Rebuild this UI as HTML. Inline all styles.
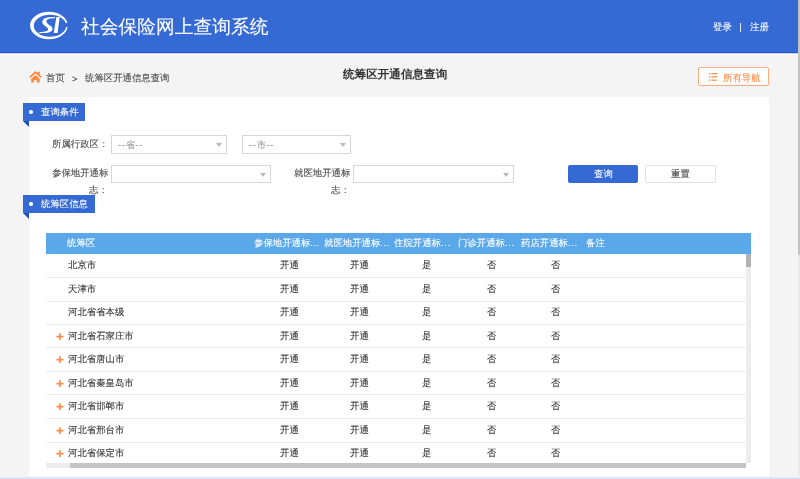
<!DOCTYPE html>
<html><head><meta charset="utf-8"><style>
*{margin:0;padding:0;box-sizing:border-box}
html,body{width:800px;height:479px;overflow:hidden;background:#f4f4f4;font-family:"Liberation Sans",sans-serif;color:#333}
.abs{position:absolute}
.t{position:absolute;white-space:nowrap;line-height:1;-webkit-text-stroke:0.1px currentColor;will-change:transform}
body{text-rendering:geometricPrecision}
</style></head><body>
<div class="abs" style="left:0px;top:0px;width:800px;height:52px;background:#3569d4"></div>
<div class="abs" style="left:0px;top:52px;width:800px;height:1px;background:#2358d2"></div>
<div class="abs" style="left:0px;top:53px;width:800px;height:1px;background:#c4d0ee"></div>
<div class="abs" style="left:0px;top:54px;width:800px;height:1px;background:#fdfdf6"></div>
<svg class="abs" style="left:28px;top:8px" width="44" height="34" viewBox="0 0 44 34">
  <path fill="#fff" fill-rule="evenodd" d="M2.1 17.5 A18.8 13.65 0 1 0 39.7 17.5 A18.8 13.65 0 1 0 2.1 17.5 Z M5.8 17.8 A16.2 11 0 1 0 38.2 17.8 A16.2 11 0 1 0 5.8 17.8 Z"/>
  <path fill="#3569d4" d="M35 15.6 L41 14.6 L41 19.2 L35 18.4 Z"/>
  <path fill="#fff" d="M26.67 9.08 C25.76 8.89 22.50 8.96 20.83 9.17 C19.17 9.38 17.71 9.72 16.67 10.33 C15.62 10.94 14.97 12.10 14.58 12.83 C14.20 13.56 14.17 14.01 14.38 14.71 C14.58 15.40 15.17 16.31 15.83 17.00 C16.49 17.69 17.67 18.32 18.33 18.88 C18.99 19.43 19.51 19.85 19.79 20.33 C20.07 20.82 20.14 21.34 20.00 21.79 C19.86 22.24 19.58 22.73 18.96 23.04 C18.33 23.35 17.47 23.49 16.25 23.67 C15.03 23.84 12.43 23.88 11.67 24.08 C10.90 24.29 10.56 24.76 11.67 24.92 C12.78 25.07 16.60 25.14 18.33 25.00 C20.07 24.86 21.11 24.55 22.08 24.08 C23.06 23.62 23.78 22.90 24.17 22.21 C24.55 21.51 24.65 20.65 24.38 19.92 C24.10 19.19 23.23 18.49 22.50 17.83 C21.77 17.17 20.66 16.55 20.00 15.96 C19.34 15.37 18.78 14.88 18.54 14.29 C18.30 13.70 18.30 12.94 18.54 12.42 C18.78 11.90 19.34 11.48 20.00 11.17 C20.66 10.85 21.46 10.68 22.50 10.54 C23.54 10.40 25.56 10.58 26.25 10.33 C26.94 10.09 27.57 9.28 26.67 9.08Z"/>
  <path fill="#fff" d="M28.4 9.1 L31.7 9.1 L29.6 25 L25.7 25 Z"/>
</svg>
<div class="t" style="left:81px;top:18px;font-size:18.76px;color:#fff;">社会保险网上查询系统</div>
<div class="t" style="left:713px;top:22px;font-size:9.396px;color:#fff;">登录</div>
<div class="abs" style="left:740px;top:23px;width:1px;height:9px;background:#dfe6f7"></div>
<div class="t" style="left:750px;top:22px;font-size:9.396px;color:#fff;">注册</div>
<svg class="abs" style="left:26px;top:66px" width="20" height="20" viewBox="0 0 20 20">
  <polyline points="4.3,10.9 9.4,6.1 14.5,10.9" fill="none" stroke="#ff8a3d" stroke-width="1.75" stroke-linecap="round" stroke-linejoin="round"/>
  <rect x="12.1" y="5.7" width="1.7" height="2.8" fill="#ff8a3d"/>
  <path d="M9.4 8.9 L13.6 12.8 L13.6 16.5 L10.7 16.5 L10.7 14 L8.1 14 L8.1 16.5 L5.2 16.5 L5.2 12.8 Z" fill="#ff8a3d"/>
</svg>
<div class="t" style="left:46px;top:73px;font-size:9.396px;color:#4a4a4a;">首页</div>
<div class="t" style="left:72px;top:74px;font-size:9.396px;color:#4a4a4a;">&gt;</div>
<div class="t" style="left:85px;top:73px;font-size:9.396px;color:#4a4a4a;">统筹区开通信息查询</div>
<div class="t" style="left:343px;top:70px;font-size:11.595px;color:#333;font-weight:bold;-webkit-text-stroke:0">统筹区开通信息查询</div>
<div class="abs" style="left:698px;top:67px;width:71px;height:19px;border:1px solid #ffab80;background:#fff;border-radius:2px"></div>
<svg class="abs" style="left:708px;top:72px" width="11" height="10" viewBox="0 0 11 10">
  <rect x="1" y="1" width="1.5" height="1.2" fill="#ff8a4a"/><rect x="3.5" y="1" width="6" height="1.2" fill="#ff8a4a"/>
  <rect x="1" y="4.3" width="1.5" height="1.2" fill="#ff8a4a"/><rect x="3.5" y="4.3" width="6" height="1.2" fill="#ff8a4a"/>
  <rect x="1" y="7.6" width="1.5" height="1.2" fill="#ff8a4a"/><rect x="3.5" y="7.6" width="5" height="1.2" fill="#ff8a4a"/>
</svg>
<div class="t" style="left:723px;top:73px;font-size:9.396px;color:#ff8a4a;">所有导航</div>
<div class="abs" style="left:29px;top:97px;width:740px;height:380px;background:#fff"></div>
<div class="abs" style="left:23px;top:103px;width:62px;height:18px;background:#3569d4"></div>
<div class="abs" style="left:29.3px;top:110.3px;width:3.4px;height:3.4px;background:#fff;border-radius:50%"></div>
<div class="abs" style="left:23px;top:121px;width:0;height:0;border-top:6px solid #1f4fb8;border-left:6px solid transparent"></div>
<div class="t" style="left:41px;top:107px;font-size:9.396px;color:#fff;">查询条件</div>
<div class="t" style="left:52px;top:139px;font-size:9.396px;color:#4a4a4a;">所属行政区：</div>
<div class="abs" style="left:111px;top:135px;width:116px;height:19px;border:1px solid #d6d6d6;background:#fff"></div>
<div class="abs" style="left:215.6px;top:143px;width:0;height:0;border-top:4px solid #bababa;border-left:3px solid transparent;border-right:3px solid transparent"></div>
<div class="t" style="left:118px;top:139.5px;font-size:9.396px;color:#9a9a9a;"><span style="letter-spacing:0.8px">--</span>省<span style="letter-spacing:1px">--</span></div>
<div class="abs" style="left:242px;top:135px;width:109px;height:19px;border:1px solid #d6d6d6;background:#fff"></div>
<div class="abs" style="left:339.6px;top:143px;width:0;height:0;border-top:4px solid #bababa;border-left:3px solid transparent;border-right:3px solid transparent"></div>
<div class="t" style="left:249px;top:139.5px;font-size:9.396px;color:#9a9a9a;"><span style="letter-spacing:0.8px">--</span>市<span style="letter-spacing:1px">--</span></div>
<div class="t" style="left:52px;top:168px;font-size:9.396px;color:#4a4a4a;">参保地开通标</div>
<div class="t" style="left:89px;top:185px;font-size:9.396px;color:#4a4a4a;">志：</div>
<div class="abs" style="left:111px;top:165px;width:160px;height:18px;border:1px solid #d6d6d6;background:#fff"></div>
<div class="abs" style="left:259.6px;top:173px;width:0;height:0;border-top:4px solid #bababa;border-left:3px solid transparent;border-right:3px solid transparent"></div>
<div class="t" style="left:294px;top:168px;font-size:9.396px;color:#4a4a4a;">就医地开通标</div>
<div class="t" style="left:331px;top:185px;font-size:9.396px;color:#4a4a4a;">志：</div>
<div class="abs" style="left:353px;top:165px;width:161px;height:18px;border:1px solid #d6d6d6;background:#fff"></div>
<div class="abs" style="left:502.6px;top:173px;width:0;height:0;border-top:4px solid #bababa;border-left:3px solid transparent;border-right:3px solid transparent"></div>
<div class="abs" style="left:568px;top:165px;width:70px;height:18px;background:#3569d4;border-radius:2px"></div>
<div class="t" style="left:594px;top:169px;font-size:9.396px;color:#fff;">查询</div>
<div class="abs" style="left:645px;top:165px;width:71px;height:18px;background:#fff;border:1px solid #e2e2e2;border-radius:2px"></div>
<div class="t" style="left:671px;top:169px;font-size:9.396px;color:#4a4a4a;">重置</div>
<div class="abs" style="left:23px;top:195px;width:72px;height:18px;background:#3569d4"></div>
<div class="abs" style="left:29.3px;top:202.3px;width:3.4px;height:3.4px;background:#fff;border-radius:50%"></div>
<div class="abs" style="left:23px;top:213px;width:0;height:0;border-top:6px solid #1f4fb8;border-left:6px solid transparent"></div>
<div class="t" style="left:41px;top:199px;font-size:9.396px;color:#fff;">统筹区信息</div>
<div class="abs" style="left:46px;top:233px;width:705px;height:21px;background:#5aa8ea"></div>
<div class="t" style="left:67px;top:238px;font-size:9.396px;color:#fff;">统筹区</div>
<div class="t" style="left:254px;top:238px;font-size:9.396px;color:#fff;">参保地开通标<span style="letter-spacing:0.7px">...</span></div>
<div class="t" style="left:324px;top:238px;font-size:9.396px;color:#fff;">就医地开通标<span style="letter-spacing:0.7px">...</span></div>
<div class="t" style="left:394px;top:238px;font-size:9.396px;color:#fff;">住院开通标<span style="letter-spacing:0.7px">...</span></div>
<div class="t" style="left:458px;top:238px;font-size:9.396px;color:#fff;">门诊开通标<span style="letter-spacing:0.7px">...</span></div>
<div class="t" style="left:521px;top:238px;font-size:9.396px;color:#fff;">药店开通标<span style="letter-spacing:0.7px">...</span></div>
<div class="t" style="left:586px;top:238px;font-size:9.396px;color:#fff;">备注</div>
<div class="abs" style="left:46px;top:277px;width:700px;height:1px;background:#ececec"></div>
<div class="t" style="left:68px;top:260.3px;font-size:9.396px;color:#333;">北京市</div>
<div class="t" style="left:280px;top:260.3px;font-size:9.396px;color:#333;">开通</div>
<div class="t" style="left:350px;top:260.3px;font-size:9.396px;color:#333;">开通</div>
<div class="t" style="left:422px;top:260.3px;font-size:9.396px;color:#333;">是</div>
<div class="t" style="left:487px;top:260.3px;font-size:9.396px;color:#333;">否</div>
<div class="t" style="left:551px;top:260.3px;font-size:9.396px;color:#333;">否</div>
<div class="abs" style="left:46px;top:301px;width:700px;height:1px;background:#ececec"></div>
<div class="t" style="left:68px;top:283.8px;font-size:9.396px;color:#333;">天津市</div>
<div class="t" style="left:280px;top:283.8px;font-size:9.396px;color:#333;">开通</div>
<div class="t" style="left:350px;top:283.8px;font-size:9.396px;color:#333;">开通</div>
<div class="t" style="left:422px;top:283.8px;font-size:9.396px;color:#333;">是</div>
<div class="t" style="left:487px;top:283.8px;font-size:9.396px;color:#333;">否</div>
<div class="t" style="left:551px;top:283.8px;font-size:9.396px;color:#333;">否</div>
<div class="abs" style="left:46px;top:324px;width:700px;height:1px;background:#ececec"></div>
<div class="t" style="left:68px;top:307.3px;font-size:9.396px;color:#333;">河北省省本级</div>
<div class="t" style="left:280px;top:307.3px;font-size:9.396px;color:#333;">开通</div>
<div class="t" style="left:350px;top:307.3px;font-size:9.396px;color:#333;">开通</div>
<div class="t" style="left:422px;top:307.3px;font-size:9.396px;color:#333;">是</div>
<div class="t" style="left:487px;top:307.3px;font-size:9.396px;color:#333;">否</div>
<div class="t" style="left:551px;top:307.3px;font-size:9.396px;color:#333;">否</div>
<div class="abs" style="left:46px;top:347px;width:700px;height:1px;background:#ececec"></div>
<svg class="abs" style="left:56px;top:332.5px" width="8" height="8" viewBox="0 0 8 8"><path d="M0.4 3.6H7.4M3.9 0.2V7" stroke="#ff8d45" stroke-width="1.7"/></svg>
<div class="t" style="left:68px;top:330.8px;font-size:9.396px;color:#333;">河北省石家庄市</div>
<div class="t" style="left:280px;top:330.8px;font-size:9.396px;color:#333;">开通</div>
<div class="t" style="left:350px;top:330.8px;font-size:9.396px;color:#333;">开通</div>
<div class="t" style="left:422px;top:330.8px;font-size:9.396px;color:#333;">是</div>
<div class="t" style="left:487px;top:330.8px;font-size:9.396px;color:#333;">否</div>
<div class="t" style="left:551px;top:330.8px;font-size:9.396px;color:#333;">否</div>
<div class="abs" style="left:46px;top:371px;width:700px;height:1px;background:#ececec"></div>
<svg class="abs" style="left:56px;top:356.0px" width="8" height="8" viewBox="0 0 8 8"><path d="M0.4 3.6H7.4M3.9 0.2V7" stroke="#ff8d45" stroke-width="1.7"/></svg>
<div class="t" style="left:68px;top:354.3px;font-size:9.396px;color:#333;">河北省唐山市</div>
<div class="t" style="left:280px;top:354.3px;font-size:9.396px;color:#333;">开通</div>
<div class="t" style="left:350px;top:354.3px;font-size:9.396px;color:#333;">开通</div>
<div class="t" style="left:422px;top:354.3px;font-size:9.396px;color:#333;">是</div>
<div class="t" style="left:487px;top:354.3px;font-size:9.396px;color:#333;">否</div>
<div class="t" style="left:551px;top:354.3px;font-size:9.396px;color:#333;">否</div>
<div class="abs" style="left:46px;top:394px;width:700px;height:1px;background:#ececec"></div>
<svg class="abs" style="left:56px;top:379.5px" width="8" height="8" viewBox="0 0 8 8"><path d="M0.4 3.6H7.4M3.9 0.2V7" stroke="#ff8d45" stroke-width="1.7"/></svg>
<div class="t" style="left:68px;top:377.8px;font-size:9.396px;color:#333;">河北省秦皇岛市</div>
<div class="t" style="left:280px;top:377.8px;font-size:9.396px;color:#333;">开通</div>
<div class="t" style="left:350px;top:377.8px;font-size:9.396px;color:#333;">开通</div>
<div class="t" style="left:422px;top:377.8px;font-size:9.396px;color:#333;">是</div>
<div class="t" style="left:487px;top:377.8px;font-size:9.396px;color:#333;">否</div>
<div class="t" style="left:551px;top:377.8px;font-size:9.396px;color:#333;">否</div>
<div class="abs" style="left:46px;top:418px;width:700px;height:1px;background:#ececec"></div>
<svg class="abs" style="left:56px;top:403.0px" width="8" height="8" viewBox="0 0 8 8"><path d="M0.4 3.6H7.4M3.9 0.2V7" stroke="#ff8d45" stroke-width="1.7"/></svg>
<div class="t" style="left:68px;top:401.3px;font-size:9.396px;color:#333;">河北省邯郸市</div>
<div class="t" style="left:280px;top:401.3px;font-size:9.396px;color:#333;">开通</div>
<div class="t" style="left:350px;top:401.3px;font-size:9.396px;color:#333;">开通</div>
<div class="t" style="left:422px;top:401.3px;font-size:9.396px;color:#333;">是</div>
<div class="t" style="left:487px;top:401.3px;font-size:9.396px;color:#333;">否</div>
<div class="t" style="left:551px;top:401.3px;font-size:9.396px;color:#333;">否</div>
<div class="abs" style="left:46px;top:442px;width:700px;height:1px;background:#ececec"></div>
<svg class="abs" style="left:56px;top:426.5px" width="8" height="8" viewBox="0 0 8 8"><path d="M0.4 3.6H7.4M3.9 0.2V7" stroke="#ff8d45" stroke-width="1.7"/></svg>
<div class="t" style="left:68px;top:424.8px;font-size:9.396px;color:#333;">河北省邢台市</div>
<div class="t" style="left:280px;top:424.8px;font-size:9.396px;color:#333;">开通</div>
<div class="t" style="left:350px;top:424.8px;font-size:9.396px;color:#333;">开通</div>
<div class="t" style="left:422px;top:424.8px;font-size:9.396px;color:#333;">是</div>
<div class="t" style="left:487px;top:424.8px;font-size:9.396px;color:#333;">否</div>
<div class="t" style="left:551px;top:424.8px;font-size:9.396px;color:#333;">否</div>
<div class="abs" style="left:46px;top:465px;width:700px;height:1px;background:#ececec"></div>
<svg class="abs" style="left:56px;top:450.0px" width="8" height="8" viewBox="0 0 8 8"><path d="M0.4 3.6H7.4M3.9 0.2V7" stroke="#ff8d45" stroke-width="1.7"/></svg>
<div class="t" style="left:68px;top:448.3px;font-size:9.396px;color:#333;">河北省保定市</div>
<div class="t" style="left:280px;top:448.3px;font-size:9.396px;color:#333;">开通</div>
<div class="t" style="left:350px;top:448.3px;font-size:9.396px;color:#333;">开通</div>
<div class="t" style="left:422px;top:448.3px;font-size:9.396px;color:#333;">是</div>
<div class="t" style="left:487px;top:448.3px;font-size:9.396px;color:#333;">否</div>
<div class="t" style="left:551px;top:448.3px;font-size:9.396px;color:#333;">否</div>
<div class="abs" style="left:746px;top:254px;width:5px;height:209px;background:#ededed"></div>
<div class="abs" style="left:746px;top:254px;width:5px;height:13px;background:#b3b3b3"></div>
<div class="abs" style="left:46px;top:463px;width:700px;height:5px;background:#ededed"></div>
<div class="abs" style="left:70px;top:463px;width:676px;height:5px;background:#c4c4c4"></div>
<div class="abs" style="left:798px;top:0px;width:2px;height:479px;background:#e9e9e9"></div>
<div class="abs" style="left:798px;top:0px;width:2px;height:255px;background:#c3c3c3"></div>
<div class="abs" style="left:0px;top:476px;width:800px;height:1px;background:#fafaf6"></div>
<div class="abs" style="left:0px;top:477px;width:800px;height:2px;background:#d9e5f6"></div>
</body></html>
